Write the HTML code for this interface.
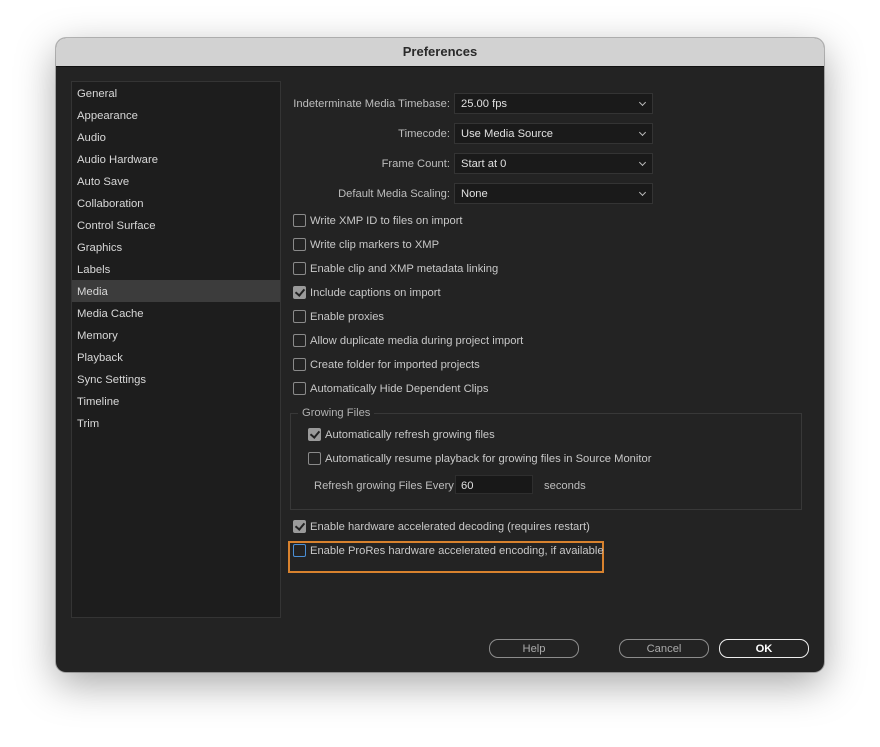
<!DOCTYPE html>
<html><head><style>
body{margin:0;width:880px;height:747px;background:#fff;position:relative;overflow:hidden;font-family:"Liberation Sans",sans-serif;}
.win{position:absolute;left:56px;top:38px;width:768px;height:634px;border-radius:10px;background:#232323;overflow:hidden;box-shadow:0 12px 40px rgba(0,0,0,.35),0 0 0 1px rgba(0,0,0,.25);}
.title{height:28px;background:#d2d2d2;border-bottom:1px solid #111;text-align:center;font-weight:bold;font-size:13px;line-height:28px;color:#2a2a2a;}
.list{position:absolute;left:15px;top:43px;width:208px;height:535px;background:#1d1d1d;border:1px solid #343434;}
.item{height:22px;line-height:24px;padding-left:5px;font-size:11.3px;color:#d8d8d8;}
.sel{background:#3c3c3c;}
.t{position:absolute;font-size:11.2px;color:#c8c8c8;white-space:nowrap;margin-top:2px;}
.lbl{position:absolute;font-size:11.2px;color:#bdbdbd;text-align:right;width:170px;left:224px;white-space:nowrap;margin-top:2px;}
.dd{position:absolute;left:398px;height:19px;background:#1a1a1a;border:1px solid #343434;font-size:11.2px;color:#e0e0e0;line-height:21px;padding-left:6px;box-sizing:content-box;width:191px;}
.dd:after{content:"";position:absolute;right:7px;top:6px;width:4px;height:4px;border-right:1px solid #bbb;border-bottom:1px solid #bbb;transform:rotate(45deg);}
.cb{position:absolute;width:11px;height:11px;border:1px solid #8a8a8a;border-radius:2px;background:#232323;}
.cb.on{background:#9a9a9a;border-color:#9a9a9a;}
.cb.on:after{content:"";position:absolute;left:3px;top:0px;width:4px;height:7px;border-right:2px solid #222;border-bottom:2px solid #222;transform:rotate(40deg);}
.btn{position:absolute;top:601px;width:88px;height:17px;border:1px solid #8c8c8c;border-radius:9px;text-align:center;line-height:19px;font-size:11.2px;color:#aaa;}
</style></head><body>
<div class="win">
<div class="title">Preferences</div>
<div class="list">
<div class="item">General</div><div class="item">Appearance</div><div class="item">Audio</div><div class="item">Audio Hardware</div><div class="item">Auto Save</div><div class="item">Collaboration</div><div class="item">Control Surface</div><div class="item">Graphics</div><div class="item">Labels</div><div class="item sel">Media</div><div class="item">Media Cache</div><div class="item">Memory</div><div class="item">Playback</div><div class="item">Sync Settings</div><div class="item">Timeline</div><div class="item">Trim</div>
</div>
<div class="lbl" style="top:58px">Indeterminate Media Timebase:</div><div class="dd" style="top:55px">25.00 fps</div>
<div class="lbl" style="top:88px">Timecode:</div><div class="dd" style="top:85px">Use Media Source</div>
<div class="lbl" style="top:118px">Frame Count:</div><div class="dd" style="top:115px">Start at 0</div>
<div class="lbl" style="top:148px">Default Media Scaling:</div><div class="dd" style="top:145px">None</div>

<div class="cb" style="left:237px;top:176px"></div><div class="t" style="left:254px;top:175px">Write XMP ID to files on import</div>
<div class="cb" style="left:237px;top:200px"></div><div class="t" style="left:254px;top:199px">Write clip markers to XMP</div>
<div class="cb" style="left:237px;top:224px"></div><div class="t" style="left:254px;top:223px">Enable clip and XMP metadata linking</div>
<div class="cb on" style="left:237px;top:248px"></div><div class="t" style="left:254px;top:247px">Include captions on import</div>
<div class="cb" style="left:237px;top:272px"></div><div class="t" style="left:254px;top:271px">Enable proxies</div>
<div class="cb" style="left:237px;top:296px"></div><div class="t" style="left:254px;top:295px">Allow duplicate media during project import</div>
<div class="cb" style="left:237px;top:320px"></div><div class="t" style="left:254px;top:319px">Create folder for imported projects</div>
<div class="cb" style="left:237px;top:344px"></div><div class="t" style="left:254px;top:343px">Automatically Hide Dependent Clips</div>

<div style="position:absolute;left:234px;top:375px;width:510px;height:95px;border:1px solid #383838;"></div>
<div class="t" style="left:242px;top:367px;background:#232323;padding:0 4px;color:#b0b0b0">Growing Files</div>
<div class="cb on" style="left:252px;top:390px"></div><div class="t" style="left:269px;top:389px">Automatically refresh growing files</div>
<div class="cb" style="left:252px;top:414px"></div><div class="t" style="left:269px;top:413px">Automatically resume playback for growing files in Source Monitor</div>
<div class="t" style="left:258px;top:440px;color:#bdbdbd">Refresh growing Files Every</div>
<div style="position:absolute;left:399px;top:437px;width:78px;height:19px;background:#181818;border:1px solid #2e2e2e;font-size:11.2px;color:#e0e0e0;line-height:21px;padding-left:5px;box-sizing:border-box">60</div>
<div class="t" style="left:488px;top:440px;color:#bdbdbd">seconds</div>

<div class="cb on" style="left:237px;top:482px"></div><div class="t" style="left:254px;top:481px">Enable hardware accelerated decoding (requires restart)</div>
<div style="position:absolute;left:232px;top:503px;width:312px;height:28px;border:2px solid #d8822e;"></div>
<div class="cb" style="left:237px;top:506px;border-color:#4a8fd6"></div><div class="t" style="left:254px;top:505px">Enable ProRes hardware accelerated encoding, if available</div>

<div class="btn" style="left:433px">Help</div>
<div class="btn" style="left:563px">Cancel</div>
<div class="btn" style="left:663px;border-color:#eee;color:#fff;font-weight:bold">OK</div>
</div>
</body></html>
